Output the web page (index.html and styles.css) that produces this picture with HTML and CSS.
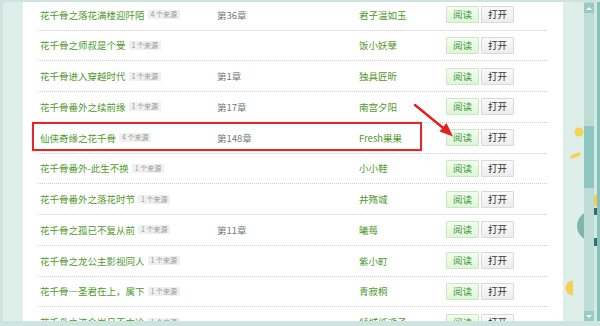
FILE: index.html
```html
<!DOCTYPE html>
<html lang="zh-CN">
<head>
    <meta charset="UTF-8">
    <title>花千骨 - 同名小说</title>
    <link rel="stylesheet" href="styles.css">
</head>
<body>
    <div class="frame">
        <div class="shell">
            <div class="panel">
                <ul class="book-list">
                    <li class="book-row">
                        <div class="col-title"><a class="book-name">花千骨之落花满楼迎阡陌</a><span class="src">4 个来源</span></div>
                        <div class="col-chapter">第36章</div>
                        <div class="col-author">君子温如玉</div>
                        <div class="col-ops"><button class="btn btn-read">阅读</button><button class="btn btn-open">打开</button></div>
                    </li>
                    <li class="book-row">
                        <div class="col-title"><a class="book-name">花千骨之师叔是个受</a><span class="src">1 个来源</span></div>
                        <div class="col-chapter"></div>
                        <div class="col-author">饭小妖孽</div>
                        <div class="col-ops"><button class="btn btn-read">阅读</button><button class="btn btn-open">打开</button></div>
                    </li>
                    <li class="book-row">
                        <div class="col-title"><a class="book-name">花千骨进入穿越时代</a><span class="src">1 个来源</span></div>
                        <div class="col-chapter">第1章</div>
                        <div class="col-author">独具匠昕</div>
                        <div class="col-ops"><button class="btn btn-read">阅读</button><button class="btn btn-open">打开</button></div>
                    </li>
                    <li class="book-row">
                        <div class="col-title"><a class="book-name">花千骨番外之续前缘</a><span class="src">1 个来源</span></div>
                        <div class="col-chapter">第17章</div>
                        <div class="col-author">南宫夕阳</div>
                        <div class="col-ops"><button class="btn btn-read">阅读</button><button class="btn btn-open">打开</button></div>
                    </li>
                    <li class="book-row marked">
                        <div class="col-title"><a class="book-name">仙侠奇缘之花千骨</a><span class="src">4 个来源</span></div>
                        <div class="col-chapter">第148章</div>
                        <div class="col-author">Fresh果果</div>
                        <div class="col-ops"><button class="btn btn-read">阅读</button><button class="btn btn-open">打开</button></div>
                        <span class="mark-box"></span>
                    </li>
                    <li class="book-row">
                        <div class="col-title"><a class="book-name">花千骨番外-此生不换</a><span class="src">1 个来源</span></div>
                        <div class="col-chapter"></div>
                        <div class="col-author">小小鞋</div>
                        <div class="col-ops"><button class="btn btn-read">阅读</button><button class="btn btn-open">打开</button></div>
                    </li>
                    <li class="book-row">
                        <div class="col-title"><a class="book-name">花千骨番外之落花时节</a><span class="src">1 个来源</span></div>
                        <div class="col-chapter"></div>
                        <div class="col-author">井殇城</div>
                        <div class="col-ops"><button class="btn btn-read">阅读</button><button class="btn btn-open">打开</button></div>
                    </li>
                    <li class="book-row">
                        <div class="col-title"><a class="book-name">花千骨之孤已不复从前</a><span class="src">1 个来源</span></div>
                        <div class="col-chapter">第11章</div>
                        <div class="col-author">曦莓</div>
                        <div class="col-ops"><button class="btn btn-read">阅读</button><button class="btn btn-open">打开</button></div>
                    </li>
                    <li class="book-row">
                        <div class="col-title"><a class="book-name">花千骨之龙公主影视同人</a><span class="src">1 个来源</span></div>
                        <div class="col-chapter"></div>
                        <div class="col-author">紫小町</div>
                        <div class="col-ops"><button class="btn btn-read">阅读</button><button class="btn btn-open">打开</button></div>
                    </li>
                    <li class="book-row">
                        <div class="col-title"><a class="book-name">花千骨—圣君在上，属下</a><span class="src">1 个来源</span></div>
                        <div class="col-chapter"></div>
                        <div class="col-author">青寂桐</div>
                        <div class="col-ops"><button class="btn btn-read">阅读</button><button class="btn btn-open">打开</button></div>
                    </li>
                    <li class="book-row">
                        <div class="col-title"><a class="book-name">花千骨之流金岁月不太冷</a><span class="src">1 个来源</span></div>
                        <div class="col-chapter"></div>
                        <div class="col-author">倾城纸鸢子</div>
                        <div class="col-ops"><button class="btn btn-read">阅读</button><button class="btn btn-open">打开</button></div>
                    </li>
                </ul>
            </div>

            <!-- 右侧背景装饰 -->
            <svg class="deco" width="21" height="319" viewBox="0 0 21 319">
                <circle cx="16" cy="130" r="4.5" fill="#f3d254"/>
                <ellipse cx="12.5" cy="153.5" rx="6" ry="2" fill="#f3d254" transform="rotate(-25 12.5 153.5)"/>
                <circle cx="29" cy="224" r="15" fill="#80b4af"/>
                <path d="M10 278.5 A7.5 7.5 0 0 0 10 293.5 Z" fill="#f4cf55"/>
            </svg>
        </div>

        <div class="scrollbar">
            <div class="scroll-btn"><span class="tri-up"></span></div>
            <div class="scroll-track"><div class="scroll-thumb"></div></div>
            <div class="scroll-btn"><span class="tri-down"></span></div>
        </div>
        <div class="gutter"></div>
        <div class="edge"></div>
    </div>

    <!-- 标注箭头 -->
    <svg class="arrow" width="600" height="326" viewBox="0 0 600 326">
        <line x1="415" y1="105" x2="445" y2="129.5" stroke="#e4201f" stroke-width="2.4" stroke-linecap="round"/>
        <polygon points="453,136.5 439.5,131.5 446.5,123" fill="#e4201f"/>
    </svg>
</body>
</html>
```
FILE: styles.css
```css
body {
    margin: 0;
    width: 600px;
    height: 326px;
    overflow: hidden;
    background: #cde5de;
    font-family: "Noto Sans CJK SC", "Liberation Sans", sans-serif;
    position: relative;
}

.frame {
    display: flex;
    height: 319px;
    margin-top: 2px;
}

.shell {
    position: relative;
    display: flex;
    width: 581px;
    margin-left: 3px;
    padding: 0 21px 0 20px;
    box-sizing: border-box;
    background: #deefe9;
    border-radius: 4px 4px 0 0;
}

.panel {
    flex: 1;
    background: #fff;
    overflow: hidden;
    padding: 0 16px 0 15px;
}

.book-list {
    list-style: none;
    margin: -2.25px 0 0;
    padding: 0;
}

.book-row {
    position: relative;
    display: flex;
    align-items: center;
    height: 30.75px;
    box-sizing: border-box;
    border-bottom: 1px dotted #cfcfcf;
    font-size: 9.5px;
}

.col-title {
    display: flex;
    align-items: center;
    width: 177px;
    padding-left: 2px;
}

.book-name {
    color: #4f9a2b;
    white-space: nowrap;
}

.src {
    margin-left: 3px;
    padding: 0 3px;
    height: 9px;
    line-height: 9px;
    font-size: 7px;
    color: #9a9a9a;
    background: #f0f0f0;
    white-space: nowrap;
}

.col-chapter {
    width: 142px;
    color: #777;
}

.col-author {
    width: 87px;
    color: #4f9a2b;
    white-space: nowrap;
}

.col-ops {
    display: flex;
    gap: 2px;
}

.btn {
    width: 33px;
    height: 17px;
    padding: 0;
    font-family: inherit;
    font-size: 9.5px;
    line-height: 15px;
    border-radius: 1px;
    cursor: pointer;
}

.btn-read {
    color: #3e9a37;
    background: linear-gradient(#f3fcf0, #def5d8);
    border: 1px solid #c9e7c1;
}

.btn-open {
    color: #333;
    background: linear-gradient(#fafafa, #ededed);
    border: 1px solid #d9d9d9;
}

/* 红框标注 */
.mark-box {
    position: absolute;
    left: -6px;
    top: -1px;
    width: 390px;
    height: 29.5px;
    box-sizing: border-box;
    border: 2px solid #e3262a;
    box-shadow: 0 0 1px rgba(200, 0, 0, 0.4);
    pointer-events: none;
}

.deco {
    position: absolute;
    right: 0;
    top: 0;
}

.scrollbar {
    display: flex;
    flex-direction: column;
    width: 10px;
    padding-top: 1px;
    background: #bddcd5;
}

.scroll-btn {
    display: flex;
    align-items: center;
    justify-content: center;
    height: 10px;
    background: #96ccc4;
}

.tri-up {
    border-left: 3px solid transparent;
    border-right: 3px solid transparent;
    border-bottom: 3px solid #fff;
}

.tri-down {
    border-left: 3px solid transparent;
    border-right: 3px solid transparent;
    border-top: 3px solid #fff;
}

.scroll-track {
    flex: 1;
}

.scroll-thumb {
    margin-top: 113px;
    height: 62px;
    background: #8cc6be;
}

.gutter {
    width: 3px;
    background: linear-gradient(to bottom,
        #d4e9e3 0 193px,
        #f2cf4f 193px 204px,
        #d4e9e3 204px 206px,
        #2f6f73 206px 213px,
        #d4e9e3 213px 236px,
        #2f6f73 236px 244px,
        #d4e9e3 244px);
}

.edge {
    width: 3px;
    background: #86c2ba;
}

.arrow {
    position: absolute;
    left: 0;
    top: 0;
    pointer-events: none;
}
```
